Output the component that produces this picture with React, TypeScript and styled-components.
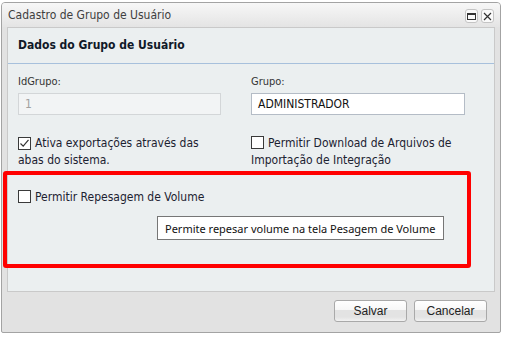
import React from "react"
import styled, { createGlobalStyle } from "styled-components"

const GlobalStyle = createGlobalStyle`
  html, body {
    margin: 0;
    padding: 0;
    background: #ffffff;
  }
  body {
    font-family: "DejaVu Sans Condensed", "DejaVu Sans", sans-serif;
    font-size: 12px;
  }
  * {
    box-sizing: border-box;
  }
`

const tahoma = `"DejaVu Sans Condensed", "DejaVu Sans", sans-serif`

const StyledPage = styled.div`
  position: relative;
  width: 505px;
  height: 339px;
  padding: 2px 0 0 1px;
`

const StyledWindow = styled.div`
  width: 500px;
  height: 331px;
  border: 1px solid #a3a3a3;
  border-radius: 4px 4px 2px 2px;
  background-color: #e2e2e2;
  display: flex;
  flex-direction: column;
`

const StyledTitleBar = styled.div`
  height: 24px;
  display: flex;
  align-items: center;
  justify-content: space-between;
  padding: 0 6px 0 6px;
  background: linear-gradient(#f7f7f7, #e4e4e4);
  border-radius: 3px 3px 0 0;
`

const StyledTitle = styled.div`
  font-family: ${tahoma};
  font-size: 12px;
  color: #404040;
`

const StyledTools = styled.div`
  display: flex;
  gap: 3px;
  padding-top: 2px;
`

const StyledTool = styled.div`
  width: 13px;
  height: 14px;
  border: 1px solid #c4c4c4;
  border-radius: 3px;
  background: #fafafa;
  display: flex;
  align-items: center;
  justify-content: center;
`

const StyledPanel = styled.div`
  margin: 0 5px;
  height: 265px;
  border: 1px solid #c9c9c9;
  background-color: #ebeff0;
`

const StyledPanelHeader = styled.div`
  height: 36px;
  border-bottom: 1px solid #a7c0dc;
  display: flex;
  align-items: center;
  padding: 0 10px 1px;
  font-family: ${tahoma};
  font-weight: bold;
  font-size: 12px;
  color: #101828;
`

const StyledForm = styled.div`
  display: grid;
  grid-template-columns: 233px 214px;
  padding: 10px 10px 0;
`

const StyledField = styled.div`
  display: flex;
  flex-direction: column;
  gap: 3px;
`

const StyledLabel = styled.div`
  font-family: ${tahoma};
  font-size: 11px;
  line-height: 16px;
  color: #333333;
`

const StyledInput = styled.div<{ $disabled?: boolean }>`
  height: 22px;
  width: ${p => (p.$disabled ? "203px" : "214px")};
  border: 1px solid ${p => (p.$disabled ? "#d3d6d8" : "#b4bcc6")};
  background-color: ${p => (p.$disabled ? "#f2f4f5" : "#ffffff")};
  color: ${p => (p.$disabled ? "#a0a0a0" : "#111111")};
  display: flex;
  align-items: center;
  padding: 0 6px;
  font-family: ${tahoma};
  font-size: 12px;
`

const StyledCheckText = styled.div<{ $width: number }>`
  width: ${p => p.$width}px;
  margin-top: 20px;
  font-family: ${tahoma};
  font-size: 12px;
  line-height: 17px;
  color: #1c2230;
`

const StyledBox = styled.span`
  display: inline-flex;
  align-items: center;
  justify-content: center;
  width: 13px;
  height: 13px;
  border: 1px solid #3a3a3a;
  background: #ffffff;
  margin-right: 4px;
  vertical-align: -2px;
`

const StyledWide = styled.div`
  grid-column: 1 / 3;
`

const StyledFooter = styled.div`
  display: flex;
  justify-content: flex-end;
  gap: 7px;
  padding: 8px 13px 0 0;
`

const StyledButton = styled.div`
  width: 73px;
  height: 22px;
  border: 1px solid #a9a9a9;
  border-radius: 3px;
  background: linear-gradient(#ffffff 0%, #f7f7f7 45%, #e3e3e3 46%, #e3e3e3 80%, #f2f2f2 100%);
  display: flex;
  align-items: center;
  justify-content: center;
  font-family: "Liberation Sans", Arial, sans-serif;
  font-size: 12px;
  color: #222222;
`

const StyledHighlight = styled.div`
  position: absolute;
  left: 3px;
  top: 171px;
  width: 468px;
  height: 97px;
  border: 4px solid #ff0000;
  border-radius: 3px;
`

const StyledTooltip = styled.div`
  position: absolute;
  left: 157px;
  top: 216px;
  width: 287px;
  height: 24px;
  border: 1px solid #767676;
  background: #ffffff;
  display: flex;
  align-items: center;
  padding: 0 7px;
  white-space: nowrap;
  font-family: "Noto Sans", "Open Sans", sans-serif;
  font-size: 11px;
  color: #111111;
`

const Check = ({ checked }: { checked?: boolean }) => (
  <StyledBox>
    {checked && (
      <svg width="11" height="11" viewBox="0 0 11 11">
        <path d="M1.5 5.5 L4.2 8.2 L9.5 1.8" fill="none" stroke="#333" strokeWidth="1.2" />
      </svg>
    )}
  </StyledBox>
)

const App = () => {
  return (
    <StyledPage>
      <GlobalStyle />
      <StyledWindow>
        <StyledTitleBar>
          <StyledTitle>Cadastro de Grupo de Usuário</StyledTitle>
          <StyledTools>
            <StyledTool>
              <svg width="9" height="7" viewBox="0 0 9 7">
                <rect x="0.5" y="0.5" width="8" height="6" fill="none" stroke="#333" />
                <rect x="0" y="0" width="9" height="2" fill="#333" />
              </svg>
            </StyledTool>
            <StyledTool>
              <svg width="9" height="9" viewBox="0 0 9 9">
                <path d="M1 1 L8 8 M8 1 L1 8" stroke="#333" strokeWidth="1.2" />
              </svg>
            </StyledTool>
          </StyledTools>
        </StyledTitleBar>
        <StyledPanel>
          <StyledPanelHeader>Dados do Grupo de Usuário</StyledPanelHeader>
          <StyledForm>
            <StyledField>
              <StyledLabel>IdGrupo:</StyledLabel>
              <StyledInput $disabled>1</StyledInput>
            </StyledField>
            <StyledField>
              <StyledLabel>Grupo:</StyledLabel>
              <StyledInput>ADMINISTRADOR</StyledInput>
            </StyledField>
            <StyledCheckText $width={205}>
              <Check checked />
              Ativa exportações através das abas do sistema.
            </StyledCheckText>
            <StyledCheckText $width={214}>
              <Check />
              Permitir Download de Arquivos de Importação de Integração
            </StyledCheckText>
            <StyledWide>
              <StyledCheckText $width={300}>
                <Check />
                Permitir Repesagem de Volume
              </StyledCheckText>
            </StyledWide>
          </StyledForm>
        </StyledPanel>
        <StyledFooter>
          <StyledButton>Salvar</StyledButton>
          <StyledButton>Cancelar</StyledButton>
        </StyledFooter>
      </StyledWindow>
      <StyledHighlight />
      <StyledTooltip>Permite repesar volume na tela Pesagem de Volume</StyledTooltip>
    </StyledPage>
  )
}

export default App
